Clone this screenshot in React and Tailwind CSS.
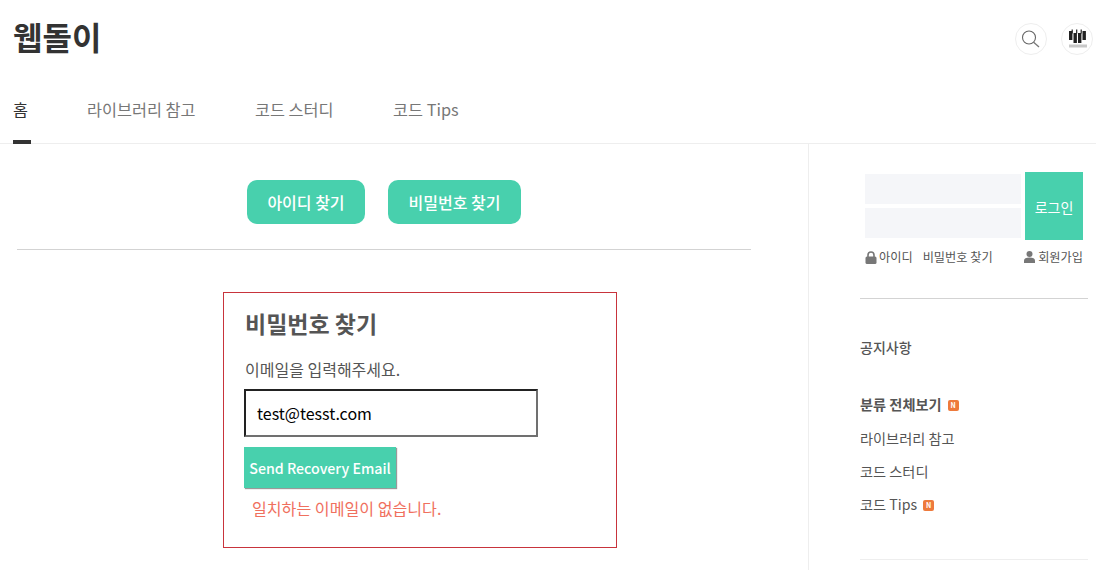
import React from 'react'

const Badge = () => (
    <span className="inline-flex items-center justify-center w-[11px] h-[11px] rounded-[2px] bg-[#ee7a3c] text-white text-[7px] font-bold leading-none ml-[6px] mt-[1px]">N</span>
)

const LockIcon = () => (
    <svg width="12" height="13" viewBox="0 0 12 13" className="mr-[2px]">
        <path d="M3 6V4a3 3 0 0 1 6 0v2" fill="none" stroke="#777" strokeWidth="1.6" />
        <rect x="0.5" y="5.5" width="11" height="7.5" rx="1.5" fill="#777" />
    </svg>
)

const UserIcon = () => (
    <svg width="11" height="12" viewBox="0 0 11 12" className="mr-[3px]">
        <circle cx="5.5" cy="3" r="3" fill="#777" />
        <path d="M0 12V9.5C0 7.5 2 6.5 5.5 6.5S11 7.5 11 9.5V12Z" fill="#777" />
    </svg>
)

const SearchIcon = () => (
    <svg width="32" height="32" viewBox="0 0 32 32" className="shrink-0">
        <circle cx="14" cy="14.5" r="6.5" fill="none" stroke="#666" strokeWidth="1.1" />
        <path d="M18.6 19.2L24 24" stroke="#777" strokeWidth="1.3" fill="none" />
    </svg>
)

const Logo = () => (
    <svg width="32" height="32" viewBox="0 0 32 32" className="shrink-0">
        <g fill="#222">
            <rect x="8" y="8" width="3.4" height="9" />
            <rect x="12.5" y="10" width="3.4" height="10" />
            <rect x="17" y="10" width="3.4" height="10" />
            <rect x="21.5" y="8" width="3.4" height="9" />
            <rect x="10.6" y="6.5" width="1.2" height="4" />
            <rect x="15.1" y="6.5" width="1.2" height="4" />
            <rect x="19.6" y="6.5" width="1.2" height="4" />
        </g>
        <rect x="8" y="21.5" width="18" height="3" fill="#c8c8c8" />
    </svg>
)

export default function App() {
    return (
        <div className="h-[570px] overflow-hidden bg-white text-[#333] font-['Noto_Sans_CJK_KR','Noto_Sans',sans-serif]">
            <header className="flex items-start justify-between h-[80px] pl-[13px] pr-[3px]">
                <h1 className="mt-[11px] text-[32px] leading-[50px] font-bold text-[#333]">웹돌이</h1>
                <div className="flex gap-[14px] mt-[23px]">
                    <button className="w-[32px] h-[32px] rounded-full border border-[#eee] flex items-center justify-center">
                        <SearchIcon />
                    </button>
                    <div className="w-[32px] h-[32px] rounded-full border border-[#eee] flex items-center justify-center">
                        <Logo />
                    </div>
                </div>
            </header>

            <nav className="flex gap-[59.5px] h-[64px] pl-[13px] border-b border-[#eee] text-[16.3px]">
                <a className="w-[18px] mr-[-3.5px] h-[64px] pt-[15px] leading-[28px] border-b-[4px] border-[#333] text-[#333]">홈</a>
                <a className="pt-[15px] leading-[28px] text-[#777]">라이브러리 참고</a>
                <a className="pt-[15px] leading-[28px] text-[#777]">코드 스터디</a>
                <a className="pt-[15px] leading-[28px] text-[#777]">코드 Tips</a>
            </nav>

            <div className="flex h-[426px]">
                <main className="w-[808px] shrink-0 pt-[36px]">
                    <div className="w-[768px]">
                        <div className="flex justify-center gap-[23px]">
                            <button className="w-[118px] h-[44px] rounded-[10px] bg-[#48d0ad] text-white text-[16px] font-medium">아이디 찾기</button>
                            <button className="w-[133px] h-[44px] rounded-[10px] bg-[#48d0ad] text-white text-[16px] font-medium">비밀번호 찾기</button>
                        </div>
                        <hr className="mx-[17px] mt-[25px] border-[#d3d3d3]" />
                    </div>
                    <section className="ml-[223px] mt-[42px] w-[394px] h-[256px] border border-[#c8343c] pl-[20px] pt-[12px]">
                        <h2 className="ml-[1px] text-[23px] leading-[36px] font-bold text-[#555]">비밀번호 찾기</h2>
                        <p className="ml-[1px] mt-[16px] text-[16px] leading-[24px] text-[#555]">이메일을 입력해주세요.</p>
                        <input
                            readOnly
                            value="test@tesst.com"
                            className="block mt-[8px] w-[294px] h-[48px] border-2 border-t-[#222] border-l-[#222] border-r-[#707070] border-b-[#707070] px-[11px] text-[16px] text-black outline-none"
                        />
                        <button className="block mt-[10px] w-[152px] h-[41px] pt-[3px] bg-[#48d0ad] text-white text-[14.2px] font-medium shadow-[1px_1px_1px_#999]">Send Recovery Email</button>
                        <p className="mt-[8px] ml-[8px] text-[16.1px] leading-[24px] text-[#f0705e]">일치하는 이메일이 없습니다.</p>
                    </section>
                </main>

                <aside className="flex-1 border-l border-[#eee] pl-[51px] pr-[8px] pt-[28px] text-[12.2px]">
                    <div className="pl-[5px] pr-[5px]">
                        <div className="flex gap-[4px]">
                            <div className="flex flex-col justify-center gap-[4px] w-[156px]">
                                <div className="h-[30px] bg-[#f5f6f9]"></div>
                                <div className="h-[30px] bg-[#f5f6f9]"></div>
                            </div>
                            <button className="w-[58px] h-[68px] pt-[3px] bg-[#48d0ad] text-white text-[14px]">로그인</button>
                        </div>
                        <div className="flex items-center justify-between mt-[8px] h-[18px] text-[#555]">
                            <div className="flex items-center">
                                <LockIcon />
                                <span>아이디</span>
                                <span className="ml-[10px]">비밀번호 찾기</span>
                            </div>
                            <div className="flex items-center">
                                <UserIcon />
                                <span>회원가입</span>
                            </div>
                        </div>
                    </div>
                    <hr className="mt-[32px] border-[#d3d3d3]" />
                    <div className="mt-[38px] text-[14px] leading-[20px] font-medium text-[#555]">공지사항</div>
                    <ul className="mt-[39px] text-[14.2px] text-[#555]">
                        <li className="flex items-center h-[18px] font-bold">분류 전체보기<Badge /></li>
                        <li className="flex items-center h-[20px] mt-[15px]">라이브러리 참고</li>
                        <li className="flex items-center h-[20px] mt-[13px]">코드 스터디</li>
                        <li className="flex items-center h-[20px] mt-[13px]">코드 Tips<Badge /></li>
                    </ul>
                    <hr className="mt-[44px] border-[#eee]" />
                </aside>
            </div>
        </div>
    )
}
